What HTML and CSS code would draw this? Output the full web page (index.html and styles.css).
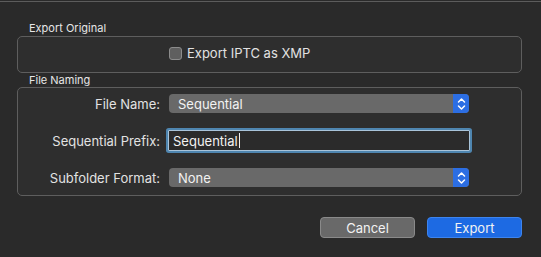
FILE: index.html
```html
<!DOCTYPE html>
<html>
<head>
<meta charset="utf-8">
<link rel="stylesheet" href="styles.css">
</head>
<body>
<div class="window">
  <div class="topline"></div>
  <div class="content">
    <div class="group-title first">Export Original</div>
    <div class="box box-original">
      <label class="check">
        <span class="checkbox"></span>
        <span>Export IPTC as XMP</span>
      </label>
    </div>
    <div class="group-title">File Naming</div>
    <div class="box box-naming">
      <div class="label">File Name:</div>
      <div class="popup">
        <span class="popup-text">Sequential</span>
        <span class="stepper"><svg width="9" height="14" viewBox="0 0 9 14"><path d="M1.5 5 L4.5 2 L7.5 5 M1.5 9 L4.5 12 L7.5 9" fill="none" stroke="#fff" stroke-width="1.5" stroke-linecap="round" stroke-linejoin="round"/></svg></span>
      </div>
      <div class="label">Sequential Prefix:</div>
      <div class="field"><span class="field-text">Sequential</span><span class="caret"></span></div>
      <div class="label">Subfolder Format:</div>
      <div class="popup">
        <span class="popup-text">None</span>
        <span class="stepper"><svg width="9" height="14" viewBox="0 0 9 14"><path d="M1.5 5 L4.5 2 L7.5 5 M1.5 9 L4.5 12 L7.5 9" fill="none" stroke="#fff" stroke-width="1.5" stroke-linecap="round" stroke-linejoin="round"/></svg></span>
      </div>
    </div>
    <div class="buttons">
      <div class="btn btn-cancel">Cancel</div>
      <div class="btn btn-export">Export</div>
    </div>
  </div>
</div>
</body>
</html>
```
FILE: styles.css
```css
html, body {
  margin: 0;
  padding: 0;
  background: #2a2a2a;
}
body {
  width: 541px;
  height: 257px;
  overflow: hidden;
  font-family: Inter, "Liberation Sans", Arial, sans-serif;
  font-size: 13px;
  color: #e2e2e2;
}
.window {
  height: 257px;
}
.topline {
  margin-top: 1px;
  height: 1px;
  background: #5c5c5c;
}
.content {
  padding: 0 19px 0 17px;
}
.group-title {
  font-size: 11px;
  line-height: 14px;
  height: 14px;
  padding-left: 12px;
  color: #e6e6e6;
}
.group-title.first {
  margin-top: 19px;
  margin-bottom: 1px;
}
.box {
  border: 1px solid #5e5e5e;
  border-radius: 5px;
  background: #2e2e2e;
}
.box-original {
  height: 35px;
  box-sizing: content-box;
  display: flex;
  align-items: center;
  padding-left: 151px;
}
.box-original .check {
  margin-top: -3px;
}
.check {
  display: flex;
  align-items: center;
  gap: 5px;
}
.checkbox {
  width: 11px;
  height: 11px;
  border: 1px solid #8c8c8c;
  border-radius: 3px;
  background: #5f5f5f;
}
.box-naming {
  display: grid;
  grid-template-columns: 142px 303px;
  grid-auto-rows: 23px;
  column-gap: 9px;
  row-gap: 14px;
  padding: 4px 0 6px 0;
  align-items: center;
}
.label {
  text-align: right;
  white-space: nowrap;
}
.popup {
  width: 300px;
  height: 19px;
  border-radius: 4px;
  background: #696969;
  display: flex;
  align-items: center;
  justify-content: space-between;
  overflow: hidden;
  color: #f2f2f2;
}
.popup-text {
  padding-left: 9px;
}
.stepper {
  width: 16px;
  height: 19px;
  background: #2c6ee3;
  display: flex;
  align-items: center;
  justify-content: center;
}
.field {
  width: 300px;
  height: 19px;
  margin-left: -1px;
  border: 1px solid #a9c4da;
  box-shadow: 0 0 0 2px #4f86b0;
  border-radius: 1px;
  background: #2b2b2b;
  display: flex;
  align-items: center;
  color: #f2f2f2;
}
.field-text {
  padding-left: 4px;
}
.caret {
  width: 1px;
  height: 15px;
  background: #f0f0f0;
  margin-left: 1px;
}
.buttons {
  display: flex;
  justify-content: flex-end;
  gap: 12px;
  margin-top: 21px;
}
.btn {
  width: 93px;
  height: 19px;
  border-radius: 4px;
  display: flex;
  align-items: center;
  justify-content: center;
  color: #f2f2f2;
  font-size: 13px;
}
.btn-cancel {
  background: #696969;
  border: 1px solid #8a8a8a;
}
.btn-export {
  background: #1d6ae3;
  border: 1px solid #3d84ee;
}
```
